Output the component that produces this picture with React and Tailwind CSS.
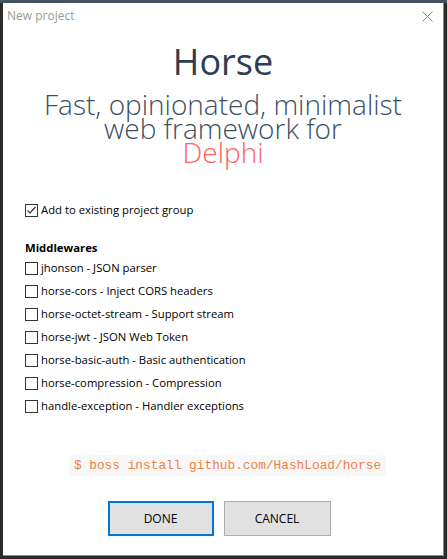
import React from "react";

const middlewares = [
  "jhonson - JSON parser",
  "horse-cors - Inject CORS headers",
  "horse-octet-stream - Support stream",
  "horse-jwt - JSON Web Token",
  "horse-basic-auth - Basic authentication",
  "horse-compression - Compression",
  "handle-exception - Handler exceptions",
];

function Box({ checked }) {
  return (
    <span className="w-[13px] h-[13px] border border-[#333] bg-white flex items-center justify-center shrink-0">
      {checked && (
        <svg width="11" height="11" viewBox="0 0 11 11">
          <path d="M1.5 5.5 L4 8 L9.5 2" fill="none" stroke="#333" strokeWidth="1.2" />
        </svg>
      )}
    </span>
  );
}

export default function App() {
  const ui = { fontFamily: '"Segoe UI", "Open Sans", sans-serif' };
  return (
    <div className="w-[447px] h-[559px] bg-[#2b2b2b] border-t-[3px] border-[#44525f] overflow-hidden">
      <div
        className="ml-[3px] w-[441px] h-[553px] bg-white border-r border-b border-[#8a8a8a] flex flex-col"
        style={ui}
      >
        {/* title bar */}
        <div className="h-[26px] flex items-center justify-between pl-[4px] pr-[10px]">
          <span className="text-[12px] text-[#9a9a9a]">New project</span>
          <svg width="11" height="11" viewBox="0 0 11 11">
            <path d="M0.5 0.5 L10.5 10.5 M10.5 0.5 L0.5 10.5" stroke="#808080" strokeWidth="1" />
          </svg>
        </div>

        <div className="flex flex-col items-center mt-[11px]" style={{ fontFamily: '"Open Sans", sans-serif' }}>
          <h1 className="text-[36px] leading-[44px] text-[#2c3e50]">Horse</h1>
          <p className="mt-[8px] text-[28px] leading-[24px] font-light text-center text-[#3d4f61]">
            Fast, opinionated, minimalist
            <br />
            web framework for
            <br />
            <span className="text-[#ff6163]">Delphi</span>
          </p>
        </div>

        <div className="pl-[22px] mt-[39px] text-[11.3px] text-black">
          <label className="flex items-center gap-[3px] h-[14px]">
            <Box checked />
            <span>Add to existing project group</span>
          </label>

          <div className="mt-[23px] font-bold h-[16px] flex items-center">Middlewares</div>

          <div className="mt-[5px] flex flex-col gap-[9px]">
            {middlewares.map((m) => (
              <label key={m} className="flex items-center gap-[3px] h-[14px]">
                <Box />
                <span>{m}</span>
              </label>
            ))}
          </div>
        </div>

        <div className="mt-[42px] flex justify-center">
          <div
            className="ml-[9px] w-[317px] h-[21px] bg-[#f7f7f7] flex items-center justify-center whitespace-nowrap text-[12.8px] text-[#f08048]"
            style={{ fontFamily: '"Liberation Mono", monospace' }}
          >
            $ boss install github.com/HashLoad/horse
          </div>
        </div>

        <div className="mt-[25px] pr-[8px] flex justify-center gap-[10px] text-[12px] text-black">
          <button className="w-[106px] h-[35px] bg-[#e1e1e1] border-2 border-[#0078d7]">DONE</button>
          <button className="w-[107px] h-[35px] bg-[#e1e1e1] border border-[#adadad]">CANCEL</button>
        </div>
      </div>
    </div>
  );
}
